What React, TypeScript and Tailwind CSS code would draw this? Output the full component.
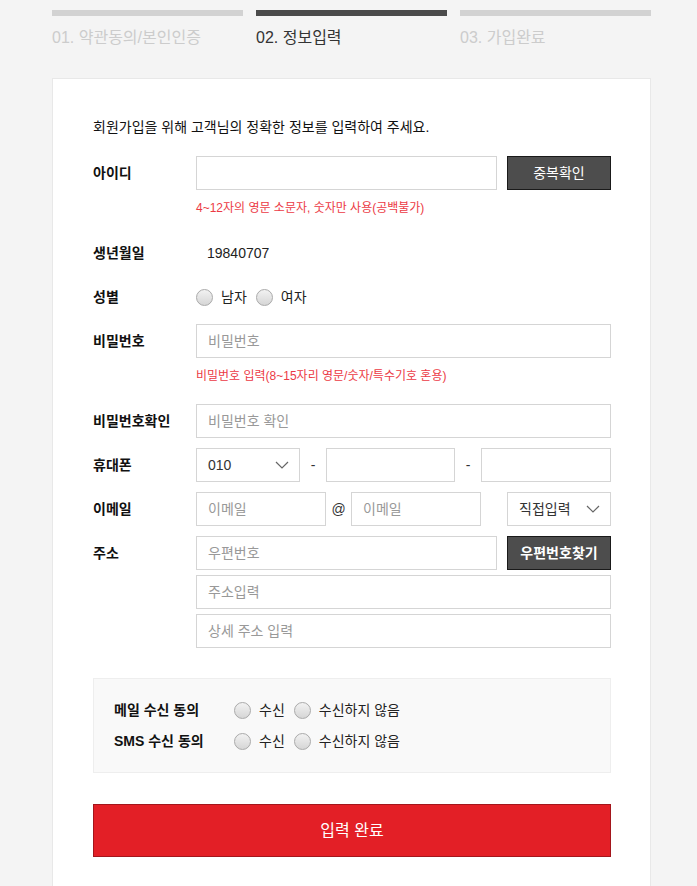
import React from "react"

const font = { fontFamily: '"Liberation Sans", "Noto Sans CJK KR", sans-serif' }

const steps = [
  { label: "01. 약관동의/본인인증", active: false },
  { label: "02. 정보입력", active: true },
  { label: "03. 가입완료", active: false },
]

function Chevron() {
  return (
    <svg width="14" height="8" viewBox="0 0 14 8" fill="none" className="shrink-0">
      <path d="M1 1l6 6 6-6" stroke="#666" strokeWidth="1.2" />
    </svg>
  )
}

function Radio({ label }: { label: string }) {
  return (
    <label className="flex items-center gap-[8px] mr-[9px]">
      <span className="w-[17px] h-[17px] rounded-full border border-[#aaaaaa] bg-linear-to-b from-[#f2f2f2] to-[#d6d6d6]" />
      <span className="text-[14px] leading-[20px] text-[#222]">{label}</span>
    </label>
  )
}

function Input({ placeholder, className = "" }: { placeholder?: string; className?: string }) {
  return (
    <input
      placeholder={placeholder}
      style={font}
      className={`h-[34px] min-w-0 border border-[#d5d5d5] px-[11px] text-[14px] text-[#333] placeholder:text-[#999] outline-none ${className}`}
    />
  )
}

function Select({ value, className = "" }: { value: string; className?: string }) {
  return (
    <div className={`h-[34px] shrink-0 border border-[#d5d5d5] pl-[11px] pr-[10px] flex items-center justify-between ${className}`}>
      <span className="text-[14px] text-[#333]">{value}</span>
      <Chevron />
    </div>
  )
}

function Row({ label, children, className = "" }: { label?: string; children: React.ReactNode; className?: string }) {
  return (
    <div className={`flex items-center min-h-[34px] ${className}`}>
      <div className="w-[103px] shrink-0 text-[14px] font-bold text-[#111]">{label}</div>
      <div className="flex-1 min-w-0 flex items-center">{children}</div>
    </div>
  )
}

function DarkButton({ children, bold = false }: { children: React.ReactNode; bold?: boolean }) {
  return (
    <button
      style={font}
      className={`ml-[10px] shrink-0 w-[104px] h-[34px] bg-[#4d4d4d] border border-[#1a1a1a] text-white text-[14px] ${bold ? "font-bold" : ""}`}
    >
      {children}
    </button>
  )
}

export default function App() {
  return (
    <div style={font} className="min-h-[886px] bg-[#f4f4f4] pt-[10px] overflow-hidden">
      <div className="ml-[52px] w-[599px]">
        {/* Steps */}
        <div className="flex gap-[13px]">
          {steps.map((s) => (
            <div key={s.label} className="flex-1">
              <div className={`h-[6px] ${s.active ? "bg-[#4b4b4b]" : "bg-[#d2d2d2]"}`} />
              <div className={`mt-[10px] text-[16px] leading-[24px] ${s.active ? "text-[#333]" : "text-[#cccccc]"}`}>
                {s.label}
              </div>
            </div>
          ))}
        </div>

        {/* Card */}
        <div className="mt-[28px] bg-white border border-[#e8e8e8] pt-[38px] pl-[40px] pr-[39px] pb-[40px]">
          <p className="text-[14px] leading-[20px] text-[#111] mb-[19px]">
            회원가입을 위해 고객님의 정확한 정보를 입력하여 주세요.
          </p>

          <Row label="아이디">
            <Input className="flex-1" />
            <DarkButton>중복확인</DarkButton>
          </Row>
          <p className="ml-[103px] mt-[10px] text-[12px] leading-[16px] text-[#ec3a45]">
            4~12자의 영문 소문자, 숫자만 사용(공백불가)
          </p>

          <Row label="생년월일" className="mt-[20px]">
            <span className="pl-[11px] text-[14px] text-[#222]">19840707</span>
          </Row>

          <Row label="성별" className="mt-[10px]">
            <Radio label="남자" />
            <Radio label="여자" />
          </Row>

          <Row label="비밀번호" className="mt-[10px]">
            <Input className="flex-1" placeholder="비밀번호" />
          </Row>
          <p className="ml-[103px] mt-[10px] text-[12px] leading-[16px] text-[#ec3a45]">
            비밀번호 입력(8~15자리 영문/숫자/특수기호 혼용)
          </p>

          <Row label="비밀번호확인" className="mt-[20px]">
            <Input className="flex-1" placeholder="비밀번호 확인" />
          </Row>

          <Row label="휴대폰" className="mt-[10px]">
            <Select value="010" className="w-[104px]" />
            <span className="w-[26px] shrink-0 text-center text-[14px] text-[#333]">-</span>
            <Input className="w-[129px] shrink-0" />
            <span className="w-[26px] shrink-0 text-center text-[14px] text-[#333]">-</span>
            <Input className="flex-1" />
          </Row>

          <Row label="이메일" className="mt-[10px]">
            <Input className="w-[130px] shrink-0" placeholder="이메일" />
            <span className="w-[25px] shrink-0 text-center text-[14px] text-[#333]">@</span>
            <Input className="w-[130px] shrink-0" placeholder="이메일" />
            <div className="flex-1" />
            <Select value="직접입력" className="w-[104px]" />
          </Row>

          <Row label="주소" className="mt-[10px]">
            <Input className="flex-1" placeholder="우편번호" />
            <DarkButton bold>우편번호찾기</DarkButton>
          </Row>
          <Row className="mt-[5px]">
            <Input className="flex-1" placeholder="주소입력" />
          </Row>
          <Row className="mt-[5px]">
            <Input className="flex-1" placeholder="상세 주소 입력" />
          </Row>

          {/* Consent */}
          <div className="mt-[30px] bg-[#f9f9f9] border border-[#eeeeee] pl-[20px] py-[21px] flex flex-col gap-[11px]">
            {["메일 수신 동의", "SMS 수신 동의"].map((l) => (
              <div key={l} className="flex items-center h-[20px]">
                <div className="w-[120px] text-[14px] font-bold text-[#111]">{l}</div>
                <Radio label="수신" />
                <Radio label="수신하지 않음" />
              </div>
            ))}
          </div>

          <button
            style={font}
            className="mt-[31px] w-full h-[53px] bg-[#e31f26] border border-[#a3161c] text-white text-[16px]"
          >
            입력 완료
          </button>
        </div>
      </div>
    </div>
  )
}
